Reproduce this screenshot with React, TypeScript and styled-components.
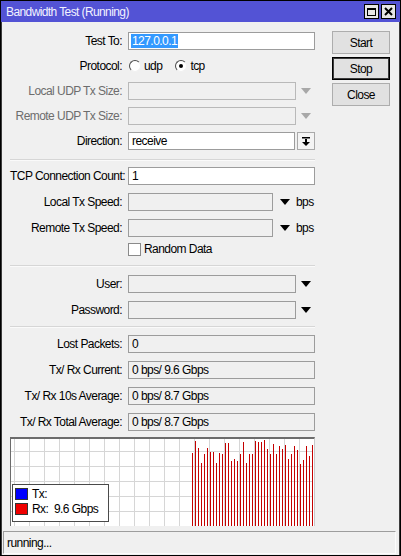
import styled, { createGlobalStyle } from 'styled-components'

const GlobalStyle = createGlobalStyle`
  html, body {
    margin: 0;
    padding: 0;
    background: #f0f0f0;
  }
  body {
    font-family: 'Liberation Sans', Arial, sans-serif;
    font-size: 12px;
    letter-spacing: -0.55px;
    color: #000;
  }
`

// rx samples shown in the graph, pixels above the baseline
const rxSamples = [
  73, 85, 78, 63, 72, 78, 74, 74, 63, 73, 72, 83, 83, 65, 67, 65, 72, 84, 63,
  72, 72, 85, 84, 84, 86, 77, 72, 82, 72, 80, 77, 81, 67, 72, 80, 76, 62, 66,
  80, 70, 81,
]

const GRAPH_W = 302
const GRAPH_H = 87

const App = () => {
  return (
    <>
      <GlobalStyle />
      <Window>
        <TitleBar>
          <Title>Bandwidth Test (Running)</Title>
          <TitleButtons>
            <TitleButton>
              <MaxIcon />
            </TitleButton>
            <TitleButton>
              <svg width='9' height='9' viewBox='0 0 9 9'>
                <path d='M1 1 L8 8 M8 1 L1 8' stroke='#000' strokeWidth='2' />
              </svg>
            </TitleButton>
          </TitleButtons>
        </TitleBar>

        <Body>
          <Main>
            <Form>
              <Section $gap={7}>
                <Row>
                  <Label>Test To:</Label>
                  <Input>
                    <Selected>127.0.0.1</Selected>
                  </Input>
                </Row>
                <Row>
                  <Label>Protocol:</Label>
                  <Radios>
                    <RadioItem>
                      <Radio />
                      udp
                    </RadioItem>
                    <RadioItem>
                      <Radio $checked />
                      tcp
                    </RadioItem>
                  </Radios>
                </Row>
                <Row>
                  <Label $disabled>Local UDP Tx Size:</Label>
                  <Field>
                    <Input $tone='disabled' />
                    <ArrowSlot $width={19}>
                      <Arrow $disabled />
                    </ArrowSlot>
                  </Field>
                </Row>
                <Row>
                  <Label $disabled>Remote UDP Tx Size:</Label>
                  <Field>
                    <Input $tone='disabled' />
                    <ArrowSlot $width={19}>
                      <Arrow $disabled />
                    </ArrowSlot>
                  </Field>
                </Row>
                <Row>
                  <Label>Direction:</Label>
                  <Field $gap={2}>
                    <Input>receive</Input>
                    <DropButton>
                      <svg width='8' height='9' viewBox='0 0 8 9'>
                        <rect x='0' y='0' width='8' height='1.5' fill='#000' />
                        <rect x='3' y='2' width='2' height='3' fill='#000' />
                        <path d='M0 5 L8 5 L4 9 Z' fill='#000' />
                      </svg>
                    </DropButton>
                  </Field>
                </Row>
              </Section>

              <Separator $before={9} $after={7} />

              <Section $gap={8}>
                <Row>
                  <Label>TCP Connection Count:</Label>
                  <Input>1</Input>
                </Row>
                <Row>
                  <Label>Local Tx Speed:</Label>
                  <Field>
                    <Input $tone='grey' />
                    <ArrowSlot $width={23}>
                      <Arrow />
                    </ArrowSlot>
                    <Unit>bps</Unit>
                  </Field>
                </Row>
                <Row>
                  <Label>Remote Tx Speed:</Label>
                  <Field>
                    <Input $tone='grey' />
                    <ArrowSlot $width={23}>
                      <Arrow />
                    </ArrowSlot>
                    <Unit>bps</Unit>
                  </Field>
                </Row>
                <CheckRow>
                  <span />
                  <CheckLabel>
                    <Checkbox />
                    Random Data
                  </CheckLabel>
                </CheckRow>
              </Section>

              <Separator $before={10} $after={9} />

              <Section $gap={8}>
                <Row>
                  <Label>User:</Label>
                  <Field>
                    <Input $tone='grey' />
                    <ArrowSlot $width={19}>
                      <Arrow />
                    </ArrowSlot>
                  </Field>
                </Row>
                <Row>
                  <Label>Password:</Label>
                  <Field>
                    <Input $tone='grey' />
                    <ArrowSlot $width={19}>
                      <Arrow />
                    </ArrowSlot>
                  </Field>
                </Row>
              </Section>

              <Separator $before={7} $after={8} />

              <Section $gap={8}>
                <Row>
                  <Label>Lost Packets:</Label>
                  <Input $tone='grey'>0</Input>
                </Row>
                <Row>
                  <Label>Tx/ Rx Current:</Label>
                  <Input $tone='grey'>0 bps/ 9.6 Gbps</Input>
                </Row>
                <Row>
                  <Label>Tx/ Rx 10s Average:</Label>
                  <Input $tone='grey'>0 bps/ 8.7 Gbps</Input>
                </Row>
                <Row>
                  <Label>Tx/ Rx Total Average:</Label>
                  <Input $tone='grey'>0 bps/ 8.7 Gbps</Input>
                </Row>
              </Section>

              <Graph>
                <svg width={GRAPH_W} height={GRAPH_H}>
                  {Array.from({ length: 21 }, (_, i) => (
                    <rect
                      key={'v' + i}
                      x={3 + i * 15}
                      y={0}
                      width={1}
                      height={GRAPH_H}
                      fill='#d6d6d6'
                    />
                  ))}
                  {Array.from({ length: 6 }, (_, i) => (
                    <rect
                      key={'h' + i}
                      x={0}
                      y={12 + i * 15}
                      width={GRAPH_W}
                      height={1}
                      fill='#d6d6d6'
                    />
                  ))}
                  {rxSamples.map((h, i) => (
                    <rect
                      key={'b' + i}
                      x={181 + i * 3}
                      y={GRAPH_H - h}
                      width={1}
                      height={h}
                      fill='#c40000'
                    />
                  ))}
                </svg>
                <Legend>
                  <LegendRow>
                    <Swatch $color='#0000ff' />
                    Tx:
                  </LegendRow>
                  <LegendRow>
                    <Swatch $color='#ee0000' />
                    {'Rx:  9.6 Gbps'}
                  </LegendRow>
                </Legend>
              </Graph>
            </Form>

            <Buttons>
              <Button>Start</Button>
              <Button $default>Stop</Button>
              <Button>Close</Button>
            </Buttons>
          </Main>

          <StatusBar>running...</StatusBar>
        </Body>
      </Window>
    </>
  )
}

export default App

const Window = styled.div`
  width: 401px;
  height: 556px;
  box-sizing: border-box;
  border: 1px solid #000;
  background: #f0f0f0;
  display: flex;
  flex-direction: column;
`

const TitleBar = styled.div`
  height: 21px;
  flex: none;
  background: #5353d5;
  display: flex;
  align-items: center;
  justify-content: space-between;
  padding: 0 4px 0 5px;
`

const Title = styled.span`
  color: #f2f2ff;
  font-size: 12px;
  letter-spacing: -0.6px;
`

const TitleButtons = styled.div`
  display: flex;
  gap: 2px;
`

const TitleButton = styled.div`
  width: 15px;
  height: 15px;
  box-sizing: border-box;
  border: 1px solid #000;
  background: #e6e6e6;
  display: flex;
  align-items: center;
  justify-content: center;
`

const MaxIcon = styled.div`
  width: 9px;
  height: 8px;
  box-sizing: border-box;
  border: 1px solid #000;
  border-top-width: 2px;
`

const Body = styled.div`
  flex: 1;
  display: flex;
  flex-direction: column;
  border-left: 1px solid #3c3c3c;
  border-right: 1px solid #3c3c3c;
`

const Main = styled.div`
  display: flex;
  align-items: flex-start;
  padding: 10px 0 0 8px;
`

const Form = styled.div`
  width: 305px;
  display: flex;
  flex-direction: column;
`

const Section = styled.div<{ $gap: number }>`
  display: flex;
  flex-direction: column;
  gap: ${(p) => p.$gap}px;
`

const Row = styled.div`
  display: grid;
  grid-template-columns: 112px 187px;
  column-gap: 6px;
  height: 18px;
  align-items: center;
`

const CheckRow = styled(Row)`
  height: 13px;
  margin-top: -3px;
`

const Label = styled.label<{ $disabled?: boolean }>`
  text-align: right;
  white-space: nowrap;
  color: ${(p) => (p.$disabled ? '#6d6d6d' : '#000')};
`

const Field = styled.div<{ $gap?: number }>`
  display: flex;
  align-items: center;
  height: 18px;
  gap: ${(p) => p.$gap ?? 0}px;
`

const Input = styled.div<{ $tone?: 'white' | 'grey' | 'disabled' }>`
  flex: 1;
  height: 18px;
  box-sizing: border-box;
  padding: 0 3px;
  display: flex;
  align-items: center;
  white-space: nowrap;
  background: ${(p) => (!p.$tone || p.$tone === 'white' ? '#fff' : '#f0f0f0')};
  border: 1px solid ${(p) => (p.$tone === 'disabled' ? '#b9b9b9' : '#9c9c9c')};
`

const Selected = styled.span`
  background: #3399ff;
  color: #fff;
  padding: 0 1px;
  margin-left: -1px;
  line-height: 14px;
`

const ArrowSlot = styled.div<{ $width: number }>`
  width: ${(p) => p.$width}px;
  flex: none;
  display: flex;
  justify-content: center;
  align-items: center;
`

const Arrow = styled.div<{ $disabled?: boolean }>`
  width: 0;
  height: 0;
  border-left: 5px solid transparent;
  border-right: 5px solid transparent;
  border-top: 6px solid ${(p) => (p.$disabled ? '#a8a8a8' : '#000')};
`

const Unit = styled.span`
  width: 19px;
  flex: none;
`

const DropButton = styled.div`
  width: 18px;
  height: 18px;
  flex: none;
  box-sizing: border-box;
  border: 1px solid #a9a9a9;
  background: #f4f4f4;
  display: flex;
  align-items: center;
  justify-content: center;
`

const Radios = styled.div`
  display: flex;
  gap: 13px;
  padding-left: 1px;
`

const RadioItem = styled.span`
  display: flex;
  align-items: center;
  gap: 3px;
`

const Radio = styled.span<{ $checked?: boolean }>`
  width: 12px;
  height: 12px;
  box-sizing: border-box;
  border-radius: 50%;
  border: 1px solid;
  border-color: #4a4a4a #f0f0f0 #f0f0f0 #4a4a4a;
  background: #fff;
  display: flex;
  align-items: center;
  justify-content: center;

  &::after {
    content: '';
    width: 4px;
    height: 4px;
    border-radius: 50%;
    background: ${(p) => (p.$checked ? '#000' : 'transparent')};
  }
`

const CheckLabel = styled.span`
  display: flex;
  align-items: center;
  gap: 3px;
`

const Checkbox = styled.span`
  width: 13px;
  height: 13px;
  box-sizing: border-box;
  border: 1px solid #8a8a8a;
  background: #fff;
`

const Separator = styled.div<{ $before: number; $after: number }>`
  height: 1px;
  background: #d6d6d6;
  border-bottom: 1px solid #fafafa;
  margin: ${(p) => p.$before}px 0 ${(p) => p.$after - 1}px 0;
`

const Graph = styled.div`
  position: relative;
  margin-top: 6px;
  height: ${GRAPH_H}px;
  border-top: 2px solid #6c6c6c;
  border-left: 1px solid #6c6c6c;
  border-right: 1px solid #c9c9c9;
  background: #fff;

  svg {
    display: block;
  }
`

const Legend = styled.div`
  position: absolute;
  left: 1px;
  top: 45px;
  width: 97px;
  height: 38px;
  box-sizing: border-box;
  border: 1px solid #4a4a4a;
  background: #fff;
  padding: 3px 0 0 2px;
  display: flex;
  flex-direction: column;
  gap: 3px;
`

const LegendRow = styled.div`
  display: flex;
  align-items: center;
  gap: 4px;
  height: 12px;
  white-space: pre;
`

const Swatch = styled.span<{ $color: string }>`
  width: 13px;
  height: 12px;
  box-sizing: border-box;
  border: 1px solid #333;
  background: ${(p) => p.$color};
`

const Buttons = styled.div`
  margin: -1px 0 0 17px;
  width: 58px;
  display: flex;
  flex-direction: column;
  gap: 3px;
`

const Button = styled.div<{ $default?: boolean }>`
  height: 23px;
  box-sizing: border-box;
  border: 1px solid ${(p) => (p.$default ? '#000' : '#adadad')};
  box-shadow: ${(p) => (p.$default ? 'inset 0 0 0 1px #3c3c3c' : 'none')};
  background: #e1e1e1;
  display: flex;
  align-items: center;
  justify-content: center;
`

const StatusBar = styled.div`
  margin: auto 3px 1px 1px;
  height: 23px;
  box-sizing: border-box;
  border-top: 1px solid #9d9d9d;
  border-left: 1px solid #9d9d9d;
  border-right: 1px solid #fcfcfc;
  border-bottom: 1px solid #fcfcfc;
  padding-left: 3px;
  display: flex;
  align-items: center;
`
